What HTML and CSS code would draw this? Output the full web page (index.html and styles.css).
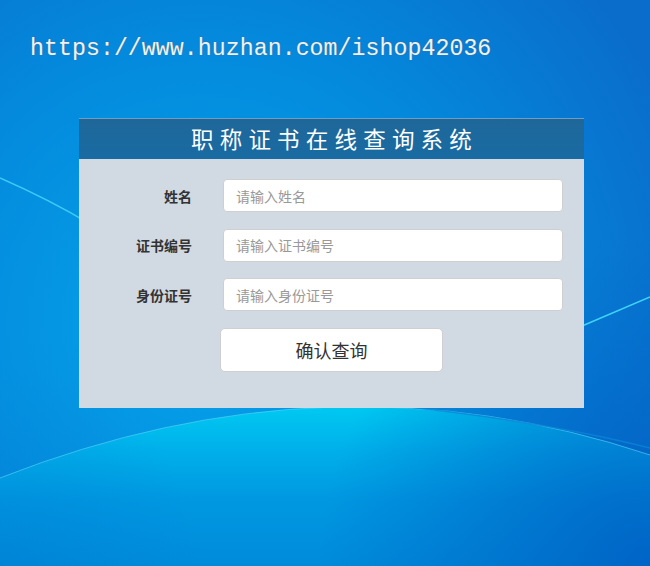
FILE: index.html
```html
<!DOCTYPE html>
<html lang="zh-CN">
<head>
	<meta charset="UTF-8">
	<title>职称证书在线查询系统</title>
	<link rel="stylesheet" href="styles.css">
</head>
<body>
	<!-- 背景 -->
	<svg class="bg" width="650" height="566" viewBox="0 0 650 566">
		<defs>
			<radialGradient id="sky" cx="200" cy="320" r="520" gradientUnits="userSpaceOnUse">
				<stop offset="0" stop-color="#05a3ea"/>
				<stop offset="0.55" stop-color="#0489dc"/>
				<stop offset="1" stop-color="#0a6ccb"/>
			</radialGradient>
			<linearGradient id="arc" x1="0" y1="400" x2="0" y2="566" gradientUnits="userSpaceOnUse">
				<stop offset="0" stop-color="#00cdf3"/>
				<stop offset="0.3" stop-color="#00b0ea"/>
				<stop offset="0.6" stop-color="#0098e1"/>
				<stop offset="1" stop-color="#008bda"/>
			</linearGradient>
			<radialGradient id="shade" cx="650" cy="566" r="330" gradientUnits="userSpaceOnUse">
				<stop offset="0" stop-color="#0060c4" stop-opacity="0.9"/>
				<stop offset="1" stop-color="#0060c4" stop-opacity="0"/>
			</radialGradient>
			<radialGradient id="shadeL" cx="0" cy="566" r="200" gradientUnits="userSpaceOnUse">
				<stop offset="0" stop-color="#0078d0" stop-opacity="0.35"/>
				<stop offset="1" stop-color="#0078d0" stop-opacity="0"/>
			</radialGradient>
		</defs>
		<rect width="650" height="566" fill="url(#sky)"/>
		<path d="M0,478 Q330,348 650,455 L650,566 L0,566 Z" fill="url(#arc)"/>
		<rect width="650" height="566" fill="url(#shade)"/>
		<rect width="650" height="566" fill="url(#shadeL)"/>
		<path d="M0,478 Q330,348 650,455" fill="none" stroke="#5ad8fa" stroke-width="1" opacity="0.6"/>
		<path d="M380,404 Q540,420 650,448" fill="none" stroke="#0a86d6" stroke-width="1.5" opacity="0.8"/>
		<path d="M0,178 Q50,200 90,224" fill="none" stroke="#3fcaf6" stroke-width="1.5"/>
		<path d="M575,329 Q610,314 650,297" fill="none" stroke="#3fd4f8" stroke-width="1.5"/>
	</svg>

	<div class="url">https://www.huzhan.com/ishop42036</div>

	<div class="panel">
		<div class="panel-head">职称证书在线查询系统</div>
		<form class="query-form">
			<label class="field-label" for="name">姓名</label>
			<input class="field-input" type="text" id="name" placeholder="请输入姓名">
			<label class="field-label" for="cert">证书编号</label>
			<input class="field-input" type="text" id="cert" placeholder="请输入证书编号">
			<label class="field-label" for="idcard">身份证号</label>
			<input class="field-input" type="text" id="idcard" placeholder="请输入身份证号">
			<span></span>
			<div class="btn-row">
				<button class="btn-query" type="button">确认查询</button>
			</div>
		</form>
	</div>
</body>
</html>
```

FILE: styles.css
```css
*{
	margin: 0;
	padding: 0;
	box-sizing: border-box;
}
body{
	position: relative;
	width: 650px;
	height: 566px;
	overflow: hidden;
	font-family: "Liberation Sans", "Noto Sans CJK SC", sans-serif;
	background: #0489dc;
}
.bg{
	position: absolute;
	left: 0;
	top: 0;
	z-index: -1;
}
.url{
	padding: 34px 0 0 30px;
	height: 118px;
	font-family: "Liberation Mono", monospace;
	font-size: 23.3px;
	line-height: 30px;
	color: #eef2f6;
	text-shadow: 0 0 1px #666;
}
.panel{
	margin-left: 79px;
	width: 505px;
	background: #d1dae3;
}
.panel-head{
	height: 41px;
	border-top: 1px solid #6f9cc0;
	background: linear-gradient(#1f6799, #186ba3);
	color: #fff;
	text-align: center;
	font-family: "Noto Sans CJK SC", sans-serif;
	font-size: 22.5px;
	line-height: 38px;
	letter-spacing: 6.2px;
	padding-left: 6px;
}
.query-form{
	display: grid;
	grid-template-columns: 113px 340px;
	column-gap: 31px;
	row-gap: 16.5px;
	align-items: center;
	padding: 20px 0 36px;
}
.field-label{
	text-align: right;
	font-family: "Noto Sans CJK SC", sans-serif;
	font-size: 14px;
	font-weight: bold;
	color: #333;
}
.field-input{
	height: 33px;
	border: 1px solid #cfcfcf;
	border-radius: 4px;
	background: #fff;
	padding: 0 12px;
	font-family: "Noto Sans CJK SC", sans-serif;
	font-size: 14px;
	color: #333;
	outline: none;
}
.field-input::placeholder{
	color: #999;
}
.btn-row{
	margin-left: -3px;
}
.btn-query{
	width: 223px;
	height: 44px;
	border: 1px solid #cfcfcf;
	border-radius: 5px;
	background: #fff;
	font-family: "Noto Sans CJK SC", sans-serif;
	font-size: 18px;
	color: #333;
	cursor: pointer;
}
```
